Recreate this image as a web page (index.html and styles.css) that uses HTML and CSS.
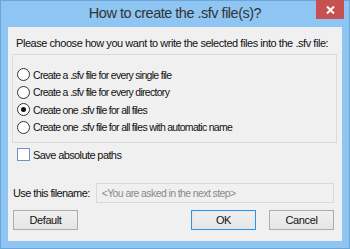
FILE: index.html
```html
<!DOCTYPE html>
<html lang="en">
<head>
  <meta charset="UTF-8" />
  <title>How to create the .sfv file(s)?</title>
  <link rel="stylesheet" href="styles.css">
</head>
<body>

  <div class="window">
    <div class="titlebar">
      <span></span>
      <div class="title">How to create the .sfv file(s)?</div>
      <button class="close">
        <svg width="9" height="8" viewBox="0 0 9 8"><path d="M1 0.5 L8 7.5 M8 0.5 L1 7.5" stroke="#fff" stroke-width="2"/></svg>
      </button>
    </div>

    <div class="content">
      <p class="intro">Please choose how you want to write the selected files into the .sfv file:</p>

      <div class="group">
        <label class="option"><span class="radio"></span>Create a .sfv file for every single file</label>
        <label class="option"><span class="radio"></span>Create a .sfv file for every directory</label>
        <label class="option"><span class="radio checked"></span>Create one .sfv file for all files</label>
        <label class="option"><span class="radio"></span>Create one .sfv file for all files with automatic name</label>
      </div>

      <label class="option check-row"><span class="checkbox"></span>Save absolute paths</label>

      <div class="filename-row">
        <span>Use this filename:</span>
        <div class="input">&lt;You are asked in the next step&gt;</div>
      </div>

      <div class="buttons">
        <button class="btn">Default</button>
        <span class="spacer"></span>
        <button class="btn primary">OK</button>
        <button class="btn">Cancel</button>
      </div>
    </div>
  </div>

</body>
</html>
```

FILE: styles.css
```css
html, body {
  margin: 0;
  padding: 0;
}

body {
  font-family: 'Liberation Sans', Arial, sans-serif;
  font-size: 11px;
  letter-spacing: -0.6px;
  color: #000;
}

.window {
  width: 350px;
  height: 249px;
  box-sizing: border-box;
  background-color: #8ec5f3;
  border: 1px solid #6ea3d6;
  padding: 0 7px 7px 7px;
  display: flex;
  flex-direction: column;
}

.titlebar {
  height: 26px;
  display: grid;
  grid-template-columns: 1fr auto 1fr;
  align-items: start;
}

.title {
  font-size: 14.5px;
  letter-spacing: -0.5px;
  color: #333;
  line-height: 26px;
  margin-top: -1px;
}

.close {
  justify-self: end;
  width: 28px;
  height: 19px;
  margin: -1px -2px 0 0;
  border: none;
  padding: 0;
  background-color: #c75050;
  display: flex;
  align-items: center;
  justify-content: center;
}

.content {
  flex: 1;
  background-color: #f0f0f0;
  padding: 0 5px 0 4px;
  display: flex;
  flex-direction: column;
}

.intro {
  margin: 10px 0 0 4px;
  line-height: 13px;
  letter-spacing: -0.45px;
  white-space: nowrap;
  color: #111;
}

.group {
  margin-top: 4px;
  height: 89px;
  box-sizing: border-box;
  border: 1px solid #dcdcdc;
  padding: 13px 0 0 4px;
  display: flex;
  flex-direction: column;
  gap: 4px;
}

.option {
  display: flex;
  align-items: center;
  height: 13.5px;
  color: #111;
}

.group .option {
  font-size: 10.5px;
  letter-spacing: -0.7px;
}

.radio {
  width: 11px;
  height: 11px;
  border: 1px solid #333;
  border-radius: 50%;
  background: #fff;
  margin-right: 3px;
  display: flex;
  align-items: center;
  justify-content: center;
}

.radio.checked::after {
  content: '';
  width: 5px;
  height: 5px;
  border-radius: 50%;
  background: #111;
}

.check-row {
  margin: 5px 0 0 5px;
}

.checkbox {
  width: 11px;
  height: 11px;
  border: 1px solid #7191c4;
  background: #fff;
  margin-right: 3px;
}

.filename-row {
  margin: 21px 0 0 1px;
  display: flex;
  align-items: center;
  gap: 6px;
  color: #111;
}

.input {
  flex: 1;
  height: 20px;
  box-sizing: border-box;
  border: 1px solid #d9d9d9;
  color: #8a8a8a;
  font-size: 10.5px;
  letter-spacing: -0.6px;
  padding-left: 5px;
  line-height: 18px;
  margin-right: 3px;
}

.buttons {
  margin: 7px 3px 0 1px;
  display: flex;
  gap: 13px;
}

.spacer {
  flex: 1;
}

.btn {
  width: 65px;
  height: 20px;
  font-family: inherit;
  font-size: 11px;
  letter-spacing: -0.4px;
  color: #111;
  border: 1px solid #acacac;
  background: linear-gradient(#f0f0f0, #e5e5e5);
  padding: 0;
}

.btn.primary {
  border-color: #3c8fd9;
  box-shadow: inset 0 0 0 1px #d8e9f8;
}
```
